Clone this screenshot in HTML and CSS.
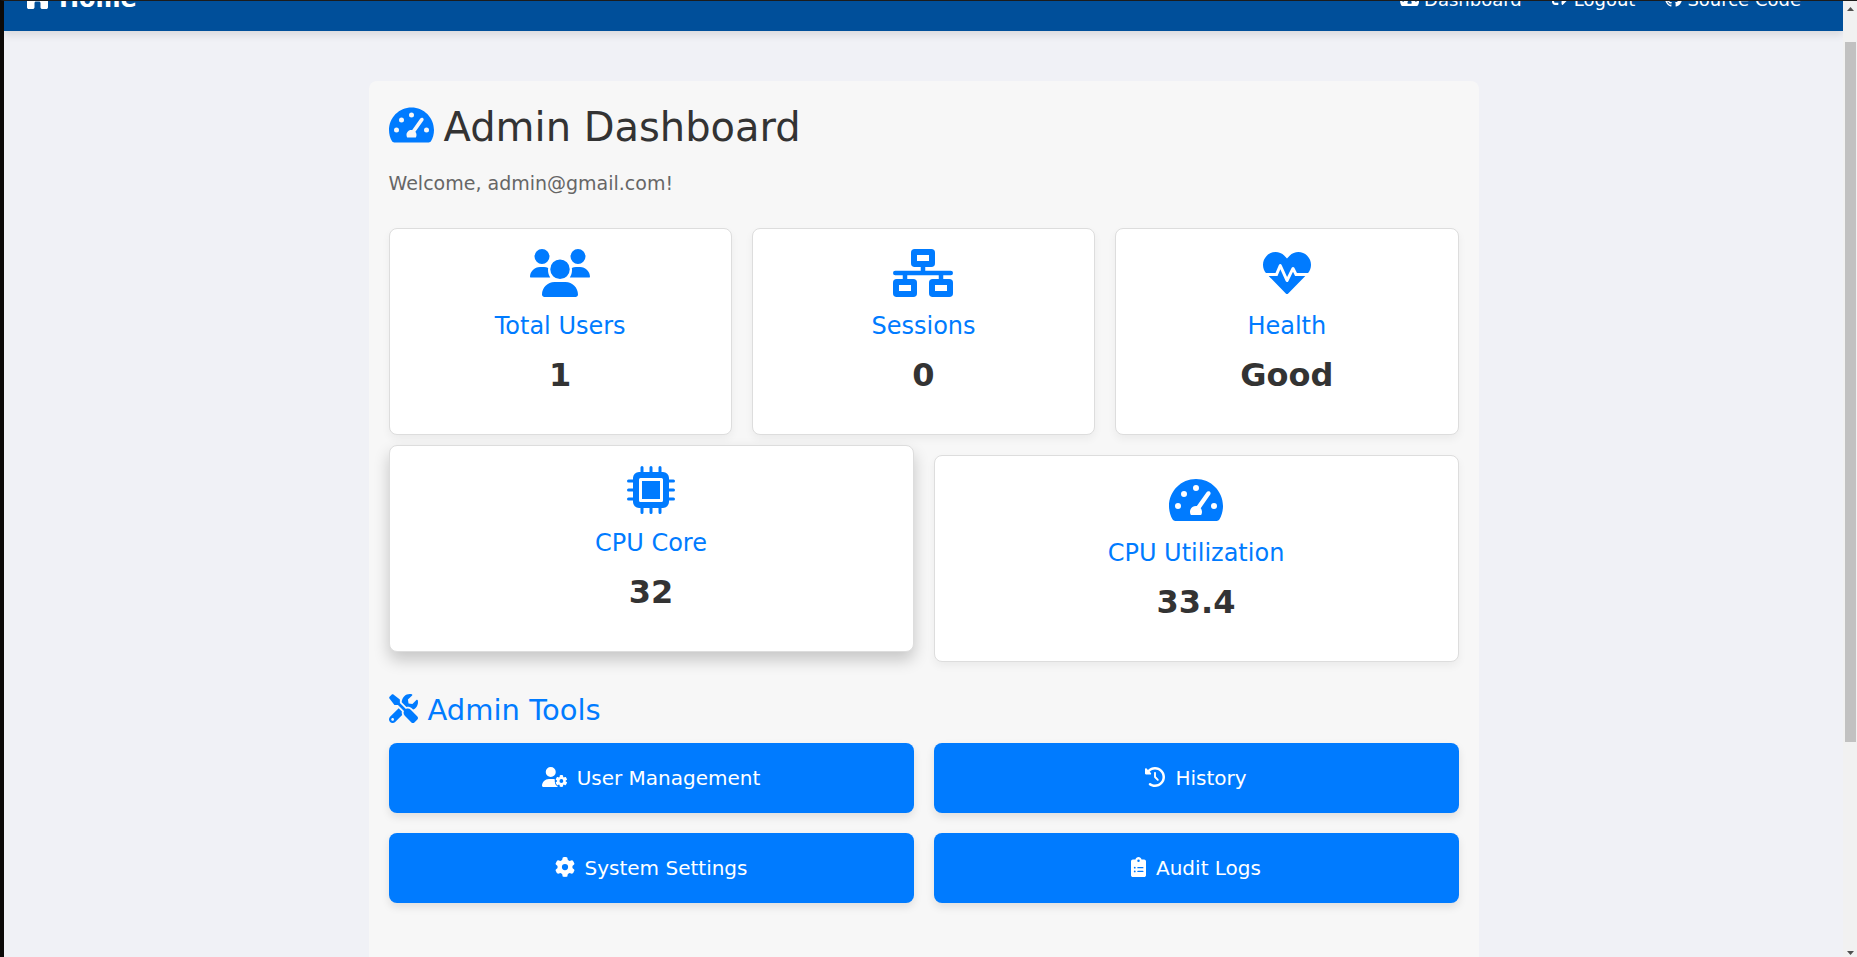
FILE: index.html
```html
<!DOCTYPE html>
<html lang="en">
<head>
<meta charset="utf-8">
<meta name="viewport" content="width=device-width, initial-scale=1">
<title>Admin Dashboard</title>
<link rel="stylesheet" href="styles.css">
</head>
<body class="window">
<svg class="sprite" aria-hidden="true">
  <symbol id="gauge" viewBox="0 0 576 512">
    <path fill-rule="evenodd" d="M288 32C129 32 0 161 0 320c0 53 14 102 39 145 6 9 16 15 28 15h442c12 0 22-6 28-15 25-43 39-92 39-145C576 161 447 32 288 32zM256 128a32 32 0 1 0 64 0a32 32 0 1 0-64 0zM128 192a32 32 0 1 0 64 0a32 32 0 1 0-64 0zM64 320a32 32 0 1 0 64 0a32 32 0 1 0-64 0zM448 320a32 32 0 1 0 64 0a32 32 0 1 0-64 0zM401 172L297 321C257 316 224 344 224 384c0 12 3 23 9 32h110c6-9 9-20 9-32 0-16-5-30-14-41L440 198c7-10 4-25-6-32s-26-4-33 6z"/>
  </symbol>
  <symbol id="house" viewBox="0 0 576 512">
    <path d="M575.8 255.5c0 18-15 32.1-32 32.1h-32l.7 160.2c0 2.7-.2 5.4-.5 8.1V472c0 22.1-17.9 40-40 40H392c-22.1 0-40-17.9-40-40V384c0-17.7-14.3-32-32-32H256c-17.7 0-32 14.3-32 32v88c0 22.1-17.9 40-40 40H104c-22.1 0-40-17.9-40-40V287.6H32c-18 0-32-14-32-32.1c0-9 3-17 10-24L266.4 8c7-7 15-8 22-8s15 2 21 7L564.8 231.5c8 7 12 15 11 24z"/>
  </symbol>
  <symbol id="sign-out" viewBox="0 0 512 512">
    <path d="M497 273L329 441c-15 15-41 4.500-41-17v-96H152c-13.300 0-24-10.700-24-24v-96c0-13.300 10.700-24 24-24h136V88c0-21.400 25.900-32 41-17l168 168c9.300 9.400 9.300 24.600 0 34zM192 436v-40c0-6.600-5.400-12-12-12H96c-17.700 0-32-14.300-32-32V160c0-17.700 14.300-32 32-32h84c6.600 0 12-5.400 12-12V76c0-6.600-5.400-12-12-12H96c-53 0-96 43-96 96v192c0 53 43 96 96 96h84c6.600 0 12-5.400 12-12z"/>
  </symbol>
  <symbol id="github" viewBox="0 0 16 16">
    <path d="M8 0C3.58 0 0 3.58 0 8c0 3.54 2.29 6.53 5.47 7.59.4.07.55-.17.55-.38 0-.19-.01-.82-.01-1.49-2.01.37-2.53-.49-2.69-.94-.09-.23-.48-.94-.82-1.13-.28-.15-.68-.52-.01-.53.63-.01 1.08.58 1.23.82.72 1.21 1.87.87 2.33.66.07-.52.28-.87.51-1.07-1.78-.2-3.64-.89-3.64-3.95 0-.87.31-1.59.82-2.15-.08-.2-.36-1.02.08-2.12 0 0 .67-.21 2.2.82.64-.18 1.32-.27 2-.27s1.36.09 2 .27c1.530-1.040 2.200-.82 2.200-.82.44 1.100.16 1.920.08 2.120.51.56.82 1.270.82 2.150 0 3.070-1.870 3.750-3.650 3.950.29.25.54.73.54 1.480 0 1.070-.01 1.930-.01 2.200 0 .21.15.46.55.38A8.010 8.010 0 0 0 16 8c0-4.420-3.580-8-8-8z"/>
  </symbol>
  <symbol id="users" viewBox="0 0 640 512">
    <path d="M128 0a80 80 0 1 1 0 160A80 80 0 1 1 128 0zM512 0a80 80 0 1 1 0 160A80 80 0 1 1 512 0zM0 298.700C0 239.800 47.800 192 106.700 192h42.700c15.900 0 31 3.500 44.600 9.700c-1.300 7.200-1.900 14.700-1.900 22.300c0 30 8 56 24 80H21.300C9.600 304 0 304 0 298.700zM424 304c16-24 24-50 24-80c0-7.600-.7-15-1.900-22.300c13.600-6.300 28.700-9.700 44.600-9.700h42.700C592.200 192 640 239.800 640 298.700c0 5.300-9.600 5.300-21.300 5.300H424zM216 216a104 104 0 1 1 208 0 104 104 0 1 1-208 0zM128 485.300C128 411.700 187.700 352 261.300 352H378.700C452.300 352 512 411.700 512 485.300c0 14.700-11.900 26.700-26.700 26.700H154.700c-14.700 0-26.700-11.900-26.700-26.700z"/>
  </symbol>
  <symbol id="network" viewBox="0 0 640 512">
    <path fill-rule="evenodd" d="M232 0h176a40 40 0 0 1 40 40v112a40 40 0 0 1-40 40h-64v40h272a24 24 0 0 1 0 48h-80v40h64a40 40 0 0 1 40 40v112a40 40 0 0 1-40 40H424a40 40 0 0 1-40-40V360a40 40 0 0 1 40-40h64v-40H152v40h64a40 40 0 0 1 40 40v112a40 40 0 0 1-40 40H40a40 40 0 0 1-40-40V360a40 40 0 0 1 40-40h64v-40H24a24 24 0 0 1 0-48h272v-40h-64a40 40 0 0 1-40-40V40a40 40 0 0 1 40-40zM256 64v64h128V64zM64 384v64h128v-64zM448 384v64h128v-64z"/>
  </symbol>
  <symbol id="heartbeat" viewBox="0 0 512 512">
    <path d="M320.200 243.800l-49.700 99.400c-6 12.100-23.400 11.700-28.900-.6l-56.900-126.300-30 71.700H60.600l182.500 186.500c7.100 7.300 18.600 7.300 25.700 0L451.400 288H342.300l-22.100-44.200zM473.700 73.900l-2.400-2.500c-51.500-52.600-135.800-52.600-187.400 0L256 100l-27.900-28.500c-51.500-52.700-135.900-52.700-187.400 0l-2.400 2.400C-10.400 123.700-12.500 203 31 256h102.400l35.900-86.200c5.400-12.900 23.600-13.200 29.400-.4l58.200 129.300 49-97.900c5.900-11.800 22.700-11.800 28.600 0l27.600 55.200H481c43.500-53 41.400-132.300-7.300-182.100z"/>
  </symbol>
  <symbol id="chip" viewBox="0 0 512 512">
    <path fill-rule="evenodd" d="M128 64h256a64 64 0 0 1 64 64v256a64 64 0 0 1-64 64H128a64 64 0 0 1-64-64V128a64 64 0 0 1 64-64zM144 128a16 16 0 0 0-16 16v224a16 16 0 0 0 16 16h224a16 16 0 0 0 16-16V144a16 16 0 0 0-16-16z"/>
    <path d="M160 160h192v192H160z"/>
    <path d="M160 16v60M256 16v60M352 16v60M160 436v60M256 436v60M352 436v60M16 160h60M16 256h60M16 352h60M436 160h60M436 256h60M436 352h60" stroke="currentColor" stroke-width="32" stroke-linecap="round"/>
  </symbol>
  <symbol id="tools" viewBox="0 0 512 512">
    <path d="M501.100 395.700L384 278.600c-23.100-23.100-57.600-27.600-85.400-13.900L192 158.100V96L78 8c-9-7-21-6-29 2L10 49c-8 8-9 20-2 29l88 114h62.100l106.600 106.600c-13.600 27.800-9.200 62.300 13.900 85.400l117.100 117.100c14.600 14.600 38.200 14.600 52.700 0l52.700-52.700c14.500-14.600 14.500-38.200 0-52.700zM331.700 225c28.300 0 54.900 11 74.900 31l19.400 19.400c15.800-6.900 30.800-16.500 43.800-29.500 37.100-37.100 49.700-89.300 37.900-136.700-2.200-9-13.500-12.100-20.100-5.500l-74.400 74.400-67.900-11.300L334 98.900l74.400-74.400c6.600-6.600 3.400-17.900-5.700-20.200-47.400-11.700-99.600.9-136.600 37.900-28.500 28.500-41.900 66.100-41.200 103.600l82.100 82.100c8.100-1.900 16.500-2.900 24.700-2.900zm-103.900 82l-56.700-56.700L18.700 402.800c-25 25-25 65.500 0 90.500s65.500 25 90.500 0l123.600-123.600c-7.600-19.900-9.900-41.600-5-62.700zM64 472c-13.200 0-24-10.800-24-24 0-13.300 10.700-24 24-24s24 10.700 24 24c0 13.200-10.700 24-24 24z"/>
  </symbol>
  <symbol id="user-gear" viewBox="0 0 640 512">
    <path d="M224 0a128 128 0 1 1 0 256A128 128 0 1 1 224 0zM178.300 304h91.400c80 0 150 60 168 208H29.700C13.300 512 0 498.700 0 482.300C0 383.800 79.800 304 178.300 304z"/>
    <circle class="gear-gap" cx="496" cy="360" r="172"/>
    <path transform="translate(16 8)" d="M436 218.200c0-7 4.500-13.300 11.300-14.800c10.500-2.400 21.500-3.700 32.700-3.700s22.200 1.300 32.700 3.700c6.800 1.500 11.300 7.800 11.300 14.800v30.600c7.900 3.400 15.400 7.700 22.300 12.800l24.900-14.300c6.100-3.500 13.700-2.700 18.500 2.400c7.600 8.100 14.300 17.200 20.100 27.200s10.300 20.400 13.500 31c2.100 6.700-1.100 13.700-7.200 17.200l-25 14.400c.4 4 .7 8.100 .7 12.300s-.2 8.200-.7 12.300l25 14.400c6.100 3.500 9.200 10.500 7.200 17.200c-3.300 10.600-7.800 21-13.500 31s-12.500 19.100-20.100 27.200c-4.800 5.100-12.500 5.900-18.500 2.400l-24.900-14.300c-6.900 5.100-14.300 9.400-22.300 12.800v30.600c0 7-4.500 13.300-11.300 14.800c-10.500 2.400-21.500 3.700-32.700 3.700s-22.200-1.300-32.700-3.700c-6.800-1.500-11.300-7.800-11.300-14.800V454.800c-8-3.400-15.600-7.700-22.500-12.900l-24.700 14.300c-6.100 3.500-13.700 2.700-18.500-2.400c-7.600-8.100-14.300-17.200-20.100-27.200s-10.300-20.400-13.500-31c-2.100-6.700 1.100-13.700 7.200-17.200l24.800-14.300c-.4-4.100-.7-8.200-.7-12.400s.2-8.300 .7-12.400L343.800 325c-6.100-3.500-9.200-10.500-7.200-17.200c3.300-10.600 7.700-21 13.500-31s12.500-19.100 20.100-27.200c4.800-5.100 12.400-5.900 18.500-2.400l24.800 14.300c6.900-5.100 14.500-9.400 22.500-12.900V218.200zm92.100 133.500a48.100 48.100 0 1 0-96.100 0 48.100 48.100 0 1 0 96.100 0z"/>
  </symbol>
  <symbol id="gear" viewBox="0 0 512 512">
    <path d="M495.900 166.600c3.200 8.700 .5 18.400-6.400 24.600l-43.300 39.400c1.100 8.300 1.700 16.800 1.700 25.400s-.6 17.100-1.700 25.400l43.300 39.400c6.900 6.200 9.600 15.900 6.400 24.600c-4.400 11.900-9.700 23.300-15.800 34.300l-4.700 8.100c-6.600 11-14 21.400-22.100 31.200c-5.900 7.200-15.700 9.600-24.500 6.800l-55.700-17.700c-13.400 10.300-28.200 18.900-44 25.400l-12.500 57.100c-2 9.100-9 16.300-18.200 17.800c-13.800 2.300-28 3.500-42.500 3.500s-28.700-1.200-42.500-3.500c-9.200-1.500-16.200-8.700-18.200-17.800l-12.500-57.100c-15.800-6.500-30.600-15.100-44-25.400L83.100 425.900c-8.800 2.800-18.600 .3-24.500-6.800c-8.100-9.800-15.500-20.200-22.100-31.200l-4.700-8.100c-6.100-11-11.400-22.400-15.800-34.300c-3.200-8.700-.5-18.400 6.400-24.600l43.300-39.400C64.600 273.100 64 264.600 64 256s.6-17.100 1.700-25.400L22.400 191.200c-6.900-6.200-9.600-15.900-6.400-24.600c4.400-11.900 9.700-23.300 15.800-34.300l4.700-8.100c6.600-11 14-21.400 22.100-31.200c5.900-7.200 15.700-9.600 24.500-6.800l55.700 17.700c13.400-10.300 28.200-18.900 44-25.400l12.500-57.100c2-9.100 9-16.300 18.200-17.800C227.300 1.200 241.500 0 256 0s28.700 1.200 42.500 3.500c9.200 1.500 16.200 8.700 18.200 17.800l12.500 57.100c15.800 6.500 30.600 15.100 44 25.400l55.700-17.700c8.800-2.800 18.600-.3 24.500 6.800c8.100 9.800 15.500 20.200 22.100 31.200l4.700 8.100c6.100 11 11.400 22.400 15.800 34.300zM256 336a80 80 0 1 0 0-160 80 80 0 1 0 0 160z"/>
  </symbol>
  <symbol id="history" viewBox="0 0 512 512">
    <path d="M75 75L41 41C25.900 25.900 0 36.600 0 57.900V168c0 13.300 10.700 24 24 24H134.100c21.400 0 32.100-25.900 17-41l-30.800-30.800C155 85.500 203 64 256 64c106 0 192 86 192 192s-86 192-192 192c-40.800 0-78.600-12.700-109.700-34.400c-14.500-10.100-34.400-6.600-44.600 7.900s-6.600 34.400 7.900 44.600C151.200 495 201.700 512 256 512c141.400 0 256-114.600 256-256S397.400 0 256 0C185.300 0 121.300 28.700 75 75zm181 53c-13.300 0-24 10.700-24 24V256c0 6.400 2.500 12.500 7 17l72 72c9.400 9.400 24.600 9.400 33.900 0s9.400-24.600 0-33.900l-65-65V152c0-13.300-10.700-24-24-24z"/>
  </symbol>
  <symbol id="clipboard" viewBox="0 0 384 512">
    <path fill-rule="evenodd" d="M336 64h-66C262 27 230 0 192 0s-70 27-78 64H48C21 64 0 85 0 112v352c0 27 21 48 48 48h288c27 0 48-21 48-48V112c0-27-21-48-48-48zM160 96a32 32 0 1 0 64 0a32 32 0 1 0-64 0zM72 272a24 24 0 1 0 48 0a24 24 0 1 0-48 0zM72 368a24 24 0 1 0 48 0a24 24 0 1 0-48 0zM176 256h128a16 16 0 0 1 0 32H176a16 16 0 0 1 0-32zM176 352h128a16 16 0 0 1 0 32H176a16 16 0 0 1 0-32z"/>
  </symbol>
</svg>

<div class="page">
  <header class="navbar">
    <a class="brand" href="#"><svg class="icon icon-wide" aria-hidden="true"><use href="#house"/></svg>Home</a>
    <nav class="nav-links">
      <a class="nav-link" href="#"><svg class="icon icon-wide" aria-hidden="true"><use href="#gauge"/></svg>Dashboard</a>
      <a class="nav-link" href="#"><svg class="icon" aria-hidden="true"><use href="#sign-out"/></svg>Logout</a>
      <a class="nav-link" href="#"><svg class="icon" aria-hidden="true"><use href="#github"/></svg>Source Code</a>
    </nav>
  </header>

  <main class="dashboard">
    <h1 class="title"><svg class="icon icon-wide" aria-hidden="true"><use href="#gauge"/></svg>Admin Dashboard</h1>
    <p class="welcome">Welcome, admin@gmail.com!</p>

    <section class="stats">
      <article class="card">
        <svg class="card-icon icon-wider" aria-hidden="true"><use href="#users"/></svg>
        <h2 class="card-title">Total Users</h2>
        <p class="card-value">1</p>
      </article>
      <article class="card">
        <svg class="card-icon icon-wider" aria-hidden="true"><use href="#network"/></svg>
        <h2 class="card-title">Sessions</h2>
        <p class="card-value">0</p>
      </article>
      <article class="card">
        <svg class="card-icon" aria-hidden="true"><use href="#heartbeat"/></svg>
        <h2 class="card-title">Health</h2>
        <p class="card-value">Good</p>
      </article>
      <article class="card card-half card-raised">
        <svg class="card-icon" aria-hidden="true"><use href="#chip"/></svg>
        <h2 class="card-title">CPU Core</h2>
        <p class="card-value">32</p>
      </article>
      <article class="card card-half">
        <svg class="card-icon icon-wide" aria-hidden="true"><use href="#gauge"/></svg>
        <h2 class="card-title">CPU Utilization</h2>
        <p class="card-value">33.4</p>
      </article>
    </section>

    <h2 class="tools-title"><svg class="icon" aria-hidden="true"><use href="#tools"/></svg>Admin Tools</h2>
    <section class="tools">
      <a class="tool" href="#"><svg class="icon icon-wider" aria-hidden="true"><use href="#user-gear"/></svg>User Management</a>
      <a class="tool" href="#"><svg class="icon" aria-hidden="true"><use href="#history"/></svg>History</a>
      <a class="tool" href="#"><svg class="icon" aria-hidden="true"><use href="#gear"/></svg>System Settings</a>
      <a class="tool" href="#"><svg class="icon icon-narrow" aria-hidden="true"><use href="#clipboard"/></svg>Audit Logs</a>
    </section>
  </main>
</div>

<div class="scrollbar" aria-hidden="true">
  <svg class="scroll-arrow" viewBox="0 0 14 17"><path d="M4 10h7L7.500 6z"/></svg>
  <div class="scroll-track"><div class="scroll-thumb"></div></div>
  <svg class="scroll-arrow" viewBox="0 0 14 17"><path d="M4 11h7L7.500 15z"/></svg>
</div>
</body>
</html>
```
FILE: styles.css
```css
* { box-sizing: border-box; }

.window {
  display: flex;
  height: 100vh;
  margin: 0;
  overflow: hidden;
  border-top: 1px solid #1c1c1c;
  border-left: 4px solid #0c0a08;
  background: #f0f1f6;
  color: #333;
  font-family: "DejaVu Sans", Verdana, sans-serif;
}

.sprite { position: absolute; width: 0; height: 0; }
.gear-gap { fill: #007bff; }

.page { flex: 1; min-width: 0; overflow: hidden; }

.icon {
  width: 1em;
  height: 1em;
  margin-right: 10px;
  fill: currentColor;
  vertical-align: -0.1em;
}
.icon-narrow { width: 0.75em; }
.icon-wide { width: 1.125em; }
.icon-wider { width: 1.25em; }

.navbar {
  display: flex;
  align-items: center;
  justify-content: space-between;
  height: 64px;
  margin-top: -34px;
  padding: 0 42px 0 20px;
  background: #004f9a;
  box-shadow: 0 4px 8px rgba(0, 0, 0, 0.1);
}
.brand, .nav-link { color: #fff; text-decoration: none; }
.brand { font-size: 24px; font-weight: bold; }
.brand .icon { margin-right: 8px; }
.nav-links { display: flex; gap: 30px; font-size: 18px; }
.nav-link .icon { margin-right: 5px; font-size: 17px; }

.dashboard {
  max-width: 1110px;
  min-height: 100vh;
  margin: 50px auto 0;
  padding: 20px;
  border-radius: 8px;
  background: #f7f7f7;
}

.title { margin: 0 0 16px; font-size: 40px; font-weight: normal; line-height: 52px; }
.title .icon { color: #007bff; }
.welcome { margin: 0 0 30px; color: #666; font-size: 19px; line-height: 29px; }

.stats { display: grid; grid-template-columns: repeat(6, 1fr); gap: 20px; }
.card {
  grid-column: span 2;
  padding: 20px;
  border: 1px solid #ddd;
  border-radius: 8px;
  background: #fff;
  box-shadow: 0 4px 8px rgba(0, 0, 0, 0.05);
  text-align: center;
}
.card-half { grid-column: span 3; }
.card-raised { transform: translateY(-10px); box-shadow: 0 8px 16px rgba(0, 0, 0, 0.2); }
.card-icon {
  display: block;
  height: 1em;
  margin: 0 auto 15px;
  color: #007bff;
  fill: currentColor;
  font-size: 48px;
}
.card-icon:not(.icon-wide):not(.icon-wider) { width: 1em; }
.card-title { margin: 0 0 10px; color: #007bff; font-size: 24px; font-weight: normal; line-height: 29px; }
.card-value { margin: 0 0 15px; font-size: 32px; font-weight: bold; line-height: 48px; }

.tools-title { margin: 31px 0 16px; color: #007bff; font-size: 29px; font-weight: normal; line-height: 34px; }
.tools { display: grid; grid-template-columns: 1fr 1fr; gap: 20px; }
.tool {
  padding: 20px;
  border-radius: 8px;
  background: #007bff;
  box-shadow: 0 4px 8px rgba(0, 0, 0, 0.1);
  color: #fff;
  font-size: 20px;
  line-height: 30px;
  text-align: center;
  text-decoration: none;
}

.scrollbar { display: flex; flex-direction: column; width: 14px; background: #f1f1f1; }
.scroll-arrow { width: 14px; height: 17px; fill: #505050; }
.scroll-track { flex: 1; padding: 24px 1px 0 2px; }
.scroll-thumb { height: 78%; background: #c1c1c1; }
```
